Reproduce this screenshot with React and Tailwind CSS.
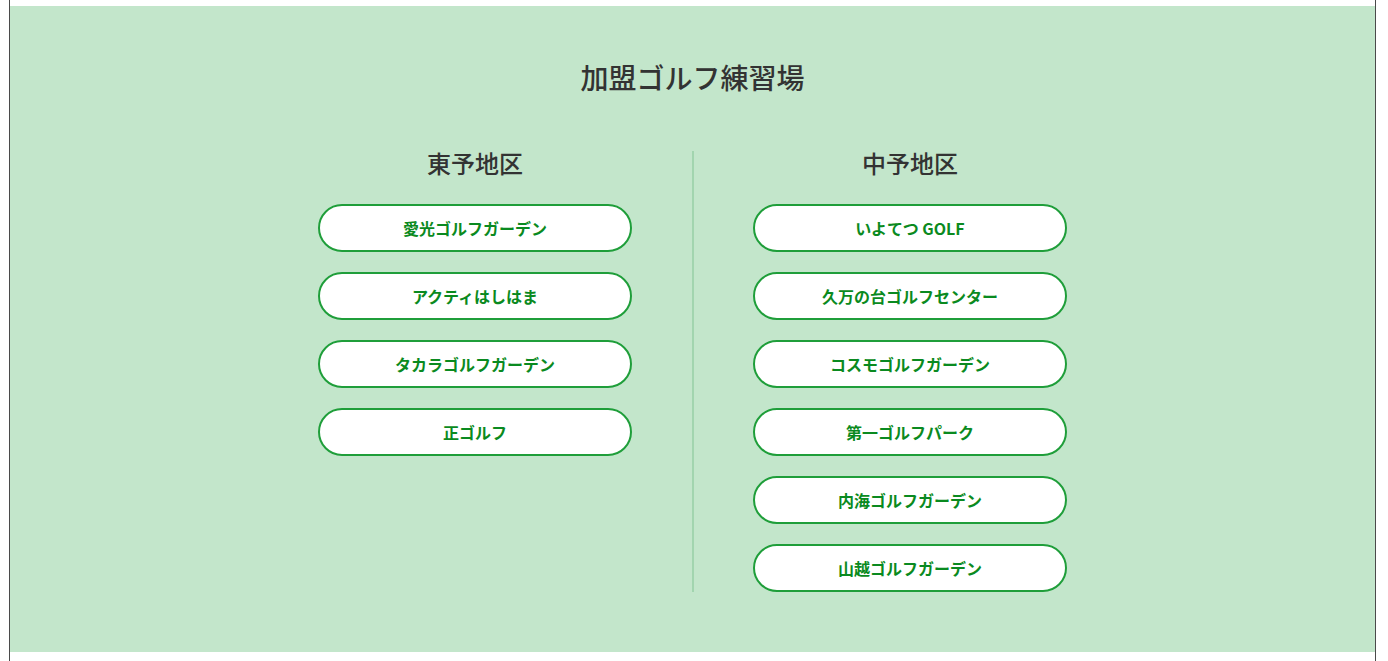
import React from "react";

const east = ["愛光ゴルフガーデン", "アクティはしはま", "タカラゴルフガーデン", "正ゴルフ"];
const central = [
  "いよてつ GOLF",
  "久万の台ゴルフセンター",
  "コスモゴルフガーデン",
  "第一ゴルフパーク",
  "内海ゴルフガーデン",
  "山越ゴルフガーデン",
];

const RangeButton = ({ name }) => (
  <a
    href="#"
    className="flex h-[48px] w-[314px] items-center justify-center rounded-full border-2 border-[#1f9e3a] bg-white text-[16px] font-bold text-[#0a8a20]"
  >
    {name}
  </a>
);

const Area = ({ title, items }) => (
  <div className="flex w-[433px] flex-col items-center">
    <h3 className="mb-[29px] text-[24px] font-medium leading-[24px] text-[#333]">
      {title}
    </h3>
    <div className="flex flex-col gap-[20px]">
      {items.map((name) => (
        <RangeButton key={name} name={name} />
      ))}
    </div>
  </div>
);

export default function App() {
  return (
    <div
      className="min-h-[661px] bg-white"
      style={{ fontFamily: '"Noto Sans CJK JP", "Noto Sans", sans-serif' }}
    >
      <div className="ml-[9px] min-h-[661px] w-[1367px] border-x border-[#4a4a4a] pt-[6px] pb-[9px]">
        <section className="bg-[#c3e6cb] pt-[50px] pb-[60px]">
          <h2 className="text-center text-[28px] font-medium leading-[42px] text-[#333]">
            加盟ゴルフ練習場
          </h2>
          <div className="mt-[53px] flex justify-center">
            <Area title="東予地区" items={east} />
            <div className="w-[2px] bg-[#a2d5af]" />
            <Area title="中予地区" items={central} />
          </div>
        </section>
      </div>
    </div>
  );
}
